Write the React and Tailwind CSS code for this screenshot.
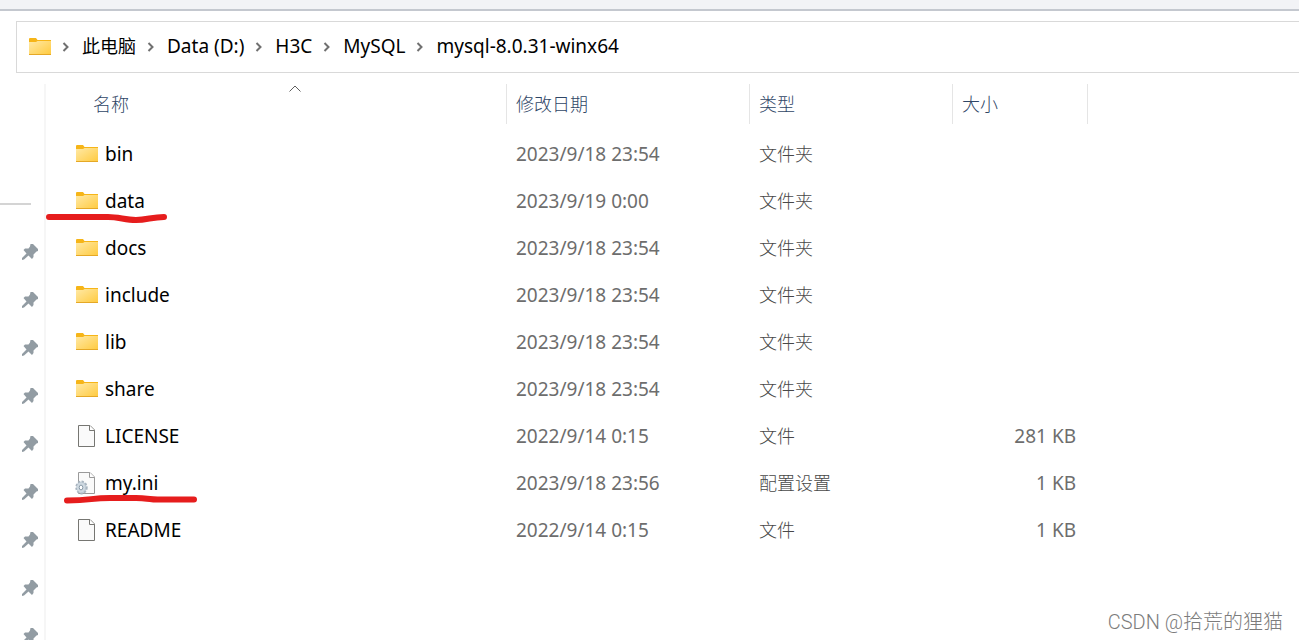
import { useState } from "react";

const path = ["此电脑", "Data (D:)", "H3C", "MySQL", "mysql-8.0.31-winx64"];

const files = [
  { name: "bin", date: "2023/9/18 23:54", type: "文件夹", icon: "folder" },
  {
    name: "data",
    date: "2023/9/19 0:00",
    type: "文件夹",
    icon: "folder",
    mark: "data",
  },
  { name: "docs", date: "2023/9/18 23:54", type: "文件夹", icon: "folder" },
  { name: "include", date: "2023/9/18 23:54", type: "文件夹", icon: "folder" },
  { name: "lib", date: "2023/9/18 23:54", type: "文件夹", icon: "folder" },
  { name: "share", date: "2023/9/18 23:54", type: "文件夹", icon: "folder" },
  {
    name: "LICENSE",
    date: "2022/9/14 0:15",
    type: "文件",
    size: "281 KB",
    icon: "file",
  },
  {
    name: "my.ini",
    date: "2023/9/18 23:56",
    type: "配置设置",
    size: "1 KB",
    icon: "config",
    mark: "ini",
  },
  {
    name: "README",
    date: "2022/9/14 0:15",
    type: "文件",
    size: "1 KB",
    icon: "file",
  },
];

const pins = [1, 2, 3, 4, 5, 6, 7, 8, 9];

const FolderIcon = () => (
  <svg width="22" height="18" viewBox="0 0 22 18" className="shrink-0">
    <defs>
      <linearGradient id="folder" x1="0" y1="0" x2="1" y2="1">
        <stop offset="0" stopColor="#ffe9a6" />
        <stop offset="1" stopColor="#ffca3e" />
      </linearGradient>
    </defs>
    <path d="M0 1.2Q0 0 1 0H7L8.5 2H22V5H0Z" fill="#f6b518" />
    <path d="M0 4H7L8.5 3H22V17H0Z" fill="url(#folder)" />
    <path d="M0 16H22V17H0Z" fill="#e5a826" />
  </svg>
);

const FileIcon = ({ config }) => (
  <svg
    width="22"
    height="22"
    viewBox="0 0 22 22"
    className="shrink-0 overflow-visible"
  >
    <path
      d="M2.5 .5H14L18.5 5V21.5H2.5Z"
      fill="#fafafa"
      stroke={config ? "#9a9a9a" : "#767672"}
    />
    <path
      d="M13.5 .5V5.5H18.5"
      fill="#fff"
      stroke={config ? "#9a9a9a" : "#767672"}
    />
    {config && (
      <g>
        <ellipse
          cx="5.5"
          cy="15.5"
          rx="5.2"
          ry="6"
          fill="#c3cfd9"
          stroke="#a9b5c0"
          strokeWidth="2"
          strokeDasharray="2.2 1.5"
        />
        <ellipse cx="5" cy="15.5" rx="4" ry="5" fill="#cfd9e1" />
        <ellipse
          cx="5"
          cy="15.5"
          rx="1.8"
          ry="2.4"
          fill="#fff"
          stroke="#8798a6"
        />
      </g>
    )}
  </svg>
);

const PinIcon = () => (
  <svg width="16" height="16" viewBox="0 0 16 16" fill="#929ca3">
    <path d="M8.5 0H11L16 5V7L14.5 7.5L11.5 10.5V13L10 15L6.5 11.5L2 15.5L0 16V14L4.5 9.5L1.5 6L3 4.5H6.5L8 2.5Z" />
  </svg>
);

const Chevron = () => (
  <svg
    width="8"
    height="10"
    viewBox="0 0 8 10"
    fill="none"
    stroke="#707070"
    strokeWidth="2"
    className="shrink-0"
  >
    <path d="M1.5 1L5.5 5L1.5 9" />
  </svg>
);

// Hand drawn red underlines
const Mark = ({ kind }) => (
  <svg
    width="160"
    height="12"
    viewBox="0 0 160 12"
    fill="none"
    stroke="#e61d1d"
    strokeWidth="6"
    strokeLinecap="round"
    strokeLinejoin="round"
    className="absolute left-0 -bottom-px"
  >
    {kind === "data" ? (
      <path d="M3 4H62C73 4 79 7 90 7S106 4 118 4" />
    ) : (
      <path d="M21 5.5C46 5.5 44 3 64 3H90C104 3 98 4.5 116 4.5H148" />
    )}
  </svg>
);

const App = () => {
  const [ascending, setAscending] = useState(true);
  const rows = ascending ? files : [...files].reverse();

  return (
    <div className="flex flex-col h-screen overflow-hidden bg-white text-[19px] leading-7 text-black font-['Noto_Sans','Noto_Sans_CJK_SC',sans-serif]">
      <div className="h-[11px] shrink-0 bg-[#f2f3f6] border-b-2 border-[#c4c8cf]" />

      <nav className="mt-[10px] ml-4 h-[52px] shrink-0 flex items-center border border-r-0 border-[#d9d9d9] pl-3">
        <FolderIcon />
        <ol className="flex items-center">
          {path.map((item, index) => (
            <li key={item} className="flex items-center">
              <span className="pl-[11px] pr-3">
                <Chevron />
              </span>
              <a
                href="#"
                className={`whitespace-nowrap pb-0.5 ${index === 0 ? "text-lg" : ""}`}
              >
                {item}
              </a>
            </li>
          ))}
        </ol>
      </nav>

      <div className="flex flex-1 min-h-0 pt-[11px]">
        <aside className="w-[46px] shrink-0 overflow-hidden border-r-2 border-[#f6f6f6]">
          <div className="mt-[119px] w-[31px] border-t-2 border-[#d4d4d4]" />
          <ul className="mt-[23px] pl-[22px]">
            {pins.map((pin) => (
              <li key={pin} className="h-12 flex items-center">
                <PinIcon />
              </li>
            ))}
          </ul>
        </aside>

        <main className="flex-1 min-w-0">
          <table className="table-fixed border-separate border-spacing-0 text-left">
            <thead className="text-lg text-[#2f4666]">
              <tr className="h-10">
                <th className="relative w-[461px] p-0 pl-[47px] font-light border-r border-[#e5e5e5]">
                  <button onClick={() => setAscending(!ascending)}>名称</button>
                  <svg
                    width="12"
                    height="7"
                    viewBox="0 0 12 7"
                    fill="none"
                    stroke="#5f5f5f"
                    className="absolute top-px left-[243px]"
                  >
                    <path
                      d={ascending ? "M.5 6.5L6 1L11.5 6.5" : "M.5 .5L6 6L11.5 .5"}
                    />
                  </svg>
                </th>
                <th className="w-[243px] p-0 pl-[9px] font-light border-r border-[#e5e5e5]">
                  修改日期
                </th>
                <th className="w-[203px] p-0 pl-[9px] font-light border-r border-[#e5e5e5]">
                  类型
                </th>
                <th className="w-[135px] p-0 pl-[9px] font-light border-r border-[#e5e5e5]">
                  大小
                </th>
              </tr>
              <tr className="h-[6px]" />
            </thead>
            <tbody className="text-[#6d6d6d]">
              {rows.map((file) => (
                <tr key={file.name} className="h-[47px]">
                  <td className="relative p-0 pl-[30px] text-black">
                    <div className="flex items-center gap-[7px]">
                      {file.icon === "folder" ? (
                        <FolderIcon />
                      ) : (
                        <FileIcon config={file.icon === "config"} />
                      )}
                      {file.name}
                    </div>
                    {file.mark && <Mark kind={file.mark} />}
                  </td>
                  <td className="p-0 pl-[9px]">{file.date}</td>
                  <td className="p-0 pl-[9px] text-lg font-light text-[#484848]">
                    {file.type}
                  </td>
                  <td className="p-0 pr-3 text-right">{file.size}</td>
                </tr>
              ))}
            </tbody>
          </table>
        </main>
      </div>

      <p className="absolute right-4 bottom-1 text-xl font-light text-[#7c7c7c] font-['Roboto','Noto_Sans_CJK_SC',sans-serif]">
        CSDN @拾荒的狸猫
      </p>
    </div>
  );
};

export default App;
